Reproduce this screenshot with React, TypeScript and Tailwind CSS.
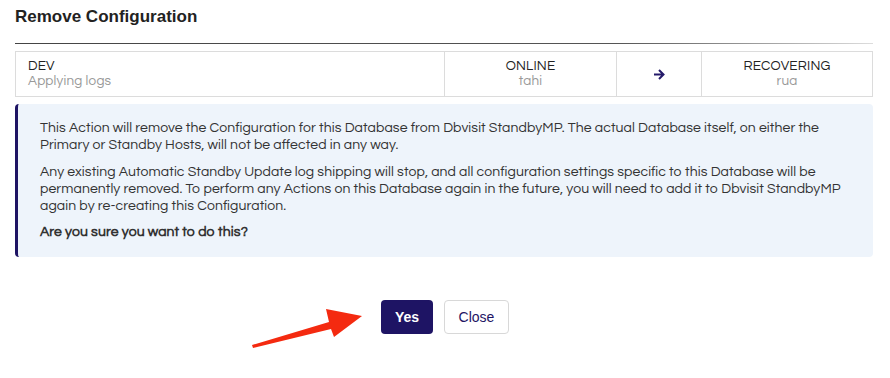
import React from 'react';

const body = "font-['Questrial','Lato',sans-serif]";

function RedArrow() {
  return (
    <svg className="absolute left-0 top-0 pointer-events-none" width="890" height="378" viewBox="0 0 890 378">
      <polygon
        points="252,345 329,322 326,309 362,316 334,337 331,329 253,348"
        fill="#f42a10"
      />
    </svg>
  );
}

export default function App() {
  return (
    <div className="relative w-[890px] h-[378px] bg-white overflow-hidden">
      <div className="ml-[15px] pt-[7px] w-[858px]">
        {/* Title */}
        <h2 className="font-['Liberation_Sans',sans-serif] font-bold text-[17px] leading-[20px] text-[#222]">
          Remove Configuration
        </h2>
        <div className="mt-[16px] h-px bg-gradient-to-r from-[#444] via-[#555] via-70% to-[#ddd]" />

        {/* Transition table */}
        <div className={`mt-[7px] h-[46px] flex border border-[#dcdcdc] text-[13.5px] tracking-[0.2px] leading-[15px] ${body}`}>
          <div className="w-[429px] pl-[12px] pt-[7px] border-r border-[#dcdcdc]">
            <div className="text-[#222]">DEV</div>
            <div className="text-[#999]">Applying logs</div>
          </div>
          <div className="w-[172px] pt-[7px] text-center border-r border-[#dcdcdc]">
            <div className="text-[#222]">ONLINE</div>
            <div className="text-[#999]">tahi</div>
          </div>
          <div className="w-[85px] flex items-center justify-center border-r border-[#dcdcdc]">
            <svg width="12" height="11" viewBox="0 0 12 11" fill="none" stroke="#241a6a" strokeWidth="2">
              <path d="M1 5.5h9.5M6 1l4.5 4.5L6 10" />
            </svg>
          </div>
          <div className="flex-1 pt-[7px] text-center">
            <div className="text-[#222]">RECOVERING</div>
            <div className="text-[#999]">rua</div>
          </div>
        </div>

        {/* Info box */}
        <div className={`mt-[7px] h-[153px] bg-[#eef4fb] border-l-[3px] border-[#1e1464] rounded-[4px] pl-[22px] pr-[10px] pt-[16px] text-[14px] tracking-[0.1px] leading-[17px] text-[#333] whitespace-nowrap ${body}`}>
          <p>
            This Action will remove the Configuration for this Database from Dbvisit StandbyMP. The actual Database itself, on either the
            <br />
            Primary or Standby Hosts, will not be affected in any way.
          </p>
          <p className="mt-[10px]">
            Any existing Automatic Standby Update log shipping will stop, and all configuration settings specific to this Database will be
            <br />
            permanently removed. To perform any Actions on this Database again in the future, you will need to add it to Dbvisit StandbyMP
            <br />
            again by re-creating this Configuration.
          </p>
          <p className="mt-[9px] font-bold">Are you sure you want to do this?</p>
        </div>
      </div>

      {/* Buttons */}
      <div className="mt-[43px] flex justify-center gap-[11px] font-['Liberation_Sans',sans-serif] text-[14px]">
        <button className="w-[52px] h-[34px] rounded-[4px] bg-[#1e1464] text-white font-bold">Yes</button>
        <button className="w-[65px] h-[34px] rounded-[4px] border border-[#d8d8d8] bg-white text-[#1e1464]">Close</button>
      </div>

      <RedArrow />
    </div>
  );
}
